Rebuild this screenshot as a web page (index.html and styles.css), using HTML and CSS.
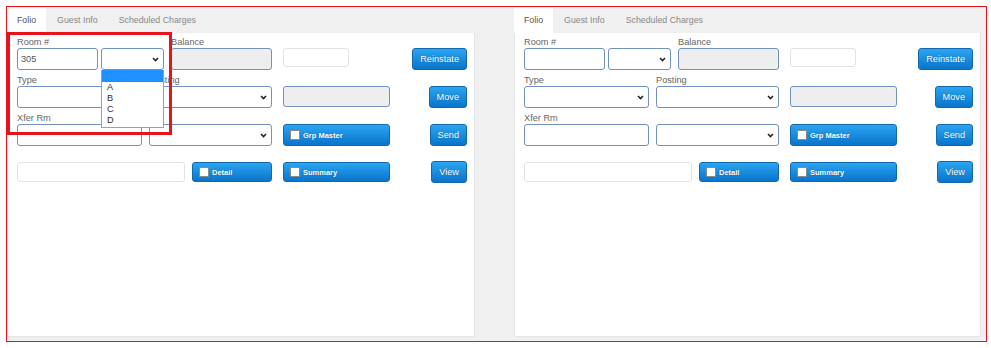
FILE: index.html
```html
<!DOCTYPE html>
<html lang="en">
<head>
  <meta charset="UTF-8" />
  <title>Folio</title>
  <link rel="stylesheet" href="styles.css">
</head>
<body>
  <div class="frame">
    <div class="panel">
      <div class="tabs">
        <span class="tab active">Folio</span>
        <span class="tab">Guest Info</span>
        <span class="tab">Scheduled Charges</span>
      </div>
      <div class="panel-body">
        <div class="labels">
          <label class="w-room">Room #</label>
          <label>Balance</label>
        </div>
        <div class="row">
          <input class="field w-room" type="text" value="305" />
          <span class="select w-suffix open">
            <select></select>
            <svg class="chev" width="7" height="5" viewBox="0 0 7 5"><path d="M1 1l2.5 2.5L6 1" /></svg>
            <ul class="dropdown">
              <li class="selected">&nbsp;</li>
              <li>A</li>
              <li>B</li>
              <li>C</li>
              <li>D</li>
            </ul>
          </span>
          <input class="field w-balance" type="text" disabled />
          <input class="field light w-small" type="text" />
          <button class="btn push">Reinstate</button>
        </div>
        <div class="labels gap">
          <label class="w-type">Type</label>
          <label>Posting</label>
        </div>
        <div class="row">
          <span class="select w-type"><select></select><svg class="chev" width="7" height="5" viewBox="0 0 7 5"><path d="M1 1l2.5 2.5L6 1" /></svg></span>
          <span class="select w-posting"><select></select><svg class="chev" width="7" height="5" viewBox="0 0 7 5"><path d="M1 1l2.5 2.5L6 1" /></svg></span>
          <input class="field w-wide short" type="text" disabled />
          <button class="btn push">Move</button>
        </div>
        <div class="labels gap">
          <label>Xfer Rm</label>
        </div>
        <div class="row">
          <input class="field w-type" type="text" />
          <span class="select w-posting"><select></select><svg class="chev" width="7" height="5" viewBox="0 0 7 5"><path d="M1 1l2.5 2.5L6 1" /></svg></span>
          <button class="btn check w-wide short"><i class="box"></i>Grp Master</button>
          <button class="btn push">Send</button>
        </div>
        <div class="row last">
          <input class="field light w-search" type="text" />
          <button class="btn check w-detail"><i class="box"></i>Detail</button>
          <button class="btn check w-wide"><i class="box"></i>Summary</button>
          <button class="btn push">View</button>
        </div>
      </div>
      <div class="highlight"></div>
    </div>

    <div class="panel">
      <div class="tabs">
        <span class="tab active">Folio</span>
        <span class="tab">Guest Info</span>
        <span class="tab">Scheduled Charges</span>
      </div>
      <div class="panel-body">
        <div class="labels">
          <label class="w-room">Room #</label>
          <label>Balance</label>
        </div>
        <div class="row">
          <input class="field w-room" type="text" />
          <span class="select w-suffix"><select></select><svg class="chev" width="7" height="5" viewBox="0 0 7 5"><path d="M1 1l2.5 2.5L6 1" /></svg></span>
          <input class="field w-balance" type="text" disabled />
          <input class="field light w-small" type="text" />
          <button class="btn push">Reinstate</button>
        </div>
        <div class="labels gap">
          <label class="w-type">Type</label>
          <label>Posting</label>
        </div>
        <div class="row">
          <span class="select w-type"><select></select><svg class="chev" width="7" height="5" viewBox="0 0 7 5"><path d="M1 1l2.5 2.5L6 1" /></svg></span>
          <span class="select w-posting"><select></select><svg class="chev" width="7" height="5" viewBox="0 0 7 5"><path d="M1 1l2.5 2.5L6 1" /></svg></span>
          <input class="field w-wide short" type="text" disabled />
          <button class="btn push">Move</button>
        </div>
        <div class="labels gap">
          <label>Xfer Rm</label>
        </div>
        <div class="row">
          <input class="field w-type" type="text" />
          <span class="select w-posting"><select></select><svg class="chev" width="7" height="5" viewBox="0 0 7 5"><path d="M1 1l2.5 2.5L6 1" /></svg></span>
          <button class="btn check w-wide short"><i class="box"></i>Grp Master</button>
          <button class="btn push">Send</button>
        </div>
        <div class="row last">
          <input class="field light w-search" type="text" />
          <button class="btn check w-detail"><i class="box"></i>Detail</button>
          <button class="btn check w-wide"><i class="box"></i>Summary</button>
          <button class="btn push">View</button>
        </div>
      </div>
    </div>
  </div>
</body>
</html>
```

FILE: styles.css
```css
body {
  margin: 0;
  padding: 0;
  background: white;
  font-family: "Liberation Sans", Arial, sans-serif;
}

.frame {
  box-sizing: border-box;
  margin: 6px 0 0 6px;
  width: 981px;
  height: 336px;
  border: 1px solid #e8141b;
  background-color: #f0f0f0;
  padding-top: 1px;
  display: flex;
  gap: 39px;
}

.panel {
  position: relative;
  width: 468px;
  height: 329px;
  display: flex;
  flex-direction: column;
}

.panel + .panel {
  width: 467px;
}

.tabs {
  display: flex;
  height: 25px;
  font-size: 8.8px;
}

.tab {
  padding: 0 10px;
  line-height: 25px;
  color: #888;
}

.tab + .tab {
  margin-left: 1px;
}

.tab.active {
  background-color: white;
  color: #555;
}

.panel-body {
  flex: 1;
  background-color: white;
  border: 1px solid #e6e6e6;
  border-top: none;
  padding: 1px 7px 0 9px;
}

.labels {
  display: flex;
  gap: 6px;
  height: 13px;
  line-height: 17px;
  margin-bottom: 1px;
  font-size: 9.2px;
  color: #666;
}

.labels.gap {
  margin-top: 2px;
}

.labels label {
  flex: none;
}

.labels .w-room {
  width: 148px;
  margin-right: 0;
}

.labels .w-type {
  width: 126px;
}

.row {
  display: flex;
  align-items: flex-start;
  gap: 7px;
  height: 22px;
}

.row.last {
  margin-top: 16px;
}

.field {
  box-sizing: border-box;
  height: 22px;
  margin: 0;
  padding: 0 3px;
  border: 1px solid #7391bd;
  border-radius: 3px;
  background: white;
  font-family: inherit;
  font-size: 9.2px;
  color: #555;
}

.field:disabled {
  background-color: #eeeeee;
}

.field.light {
  border-color: #e2e2e2;
  height: 19px;
}

.field.w-search {
  height: 20px;
}

.short {
  height: 21px;
}

.select {
  position: relative;
  box-sizing: border-box;
  height: 22px;
  flex: none;
}

.select select {
  appearance: none;
  box-sizing: border-box;
  width: 100%;
  height: 22px;
  margin: 0;
  border: 1px solid #7391bd;
  border-radius: 3px;
  background: white;
}

.chev {
  position: absolute;
  right: 5px;
  top: 9px;
  fill: none;
  stroke: #222;
  stroke-width: 1.6;
}

.dropdown {
  position: absolute;
  left: 0;
  top: 22px;
  width: 63px;
  box-sizing: border-box;
  margin: 0;
  padding: 0 0 1px;
  list-style: none;
  background: white;
  border: 1px solid #a0a0a0;
  border-top: none;
  font-size: 9.2px;
  color: #3a2a1a;
  z-index: 2;
}

.dropdown li {
  height: 11px;
  line-height: 11px;
  padding-left: 5px;
}

.dropdown li.selected {
  height: 12px;
  background-color: #1e90ff;
}

.w-room { width: 81px; margin-right: -4px; flex: none; }
.w-suffix { width: 63px; }
.w-balance { width: 101px; margin-right: 4px; flex: none; }
.w-small { width: 66px; flex: none; }
.w-type { width: 125px; flex: none; }
.w-posting { width: 123px; margin-right: 4px; }
.w-wide { width: 107px; flex: none; }
.w-search { width: 168px; flex: none; }

.btn {
  box-sizing: border-box;
  height: 22px;
  margin: 0;
  padding: 0 7px;
  border: 1px solid #1469ad;
  border-radius: 3px;
  background: linear-gradient(#2aa5f2, #0a74ca);
  color: white;
  font-family: inherit;
  font-size: 9.2px;
  text-shadow: 0 0 1px rgba(0, 40, 90, 0.5);
  cursor: pointer;
}

.btn.push {
  margin-left: auto;
  flex: none;
}

.btn.w-detail {
  width: 80px;
  margin-right: 4px;
  flex: none;
}

.row.last .btn {
  height: 20px;
}

.row.last .btn.push {
  height: 22px;
  margin-top: -1px;
}

.btn.check {
  display: flex;
  align-items: center;
  padding: 0 0 0 6px;
  font-size: 7.5px;
  font-weight: bold;
}

.box {
  box-sizing: border-box;
  width: 10px;
  height: 10px;
  margin-right: 3px;
  background: white;
  border: 1px solid #8a8a8a;
  border-radius: 1px;
}

.highlight {
  position: absolute;
  left: 0;
  top: 24px;
  width: 165px;
  height: 103px;
  box-sizing: border-box;
  border: 3px solid #e8141b;
  pointer-events: none;
  z-index: 3;
}
```
